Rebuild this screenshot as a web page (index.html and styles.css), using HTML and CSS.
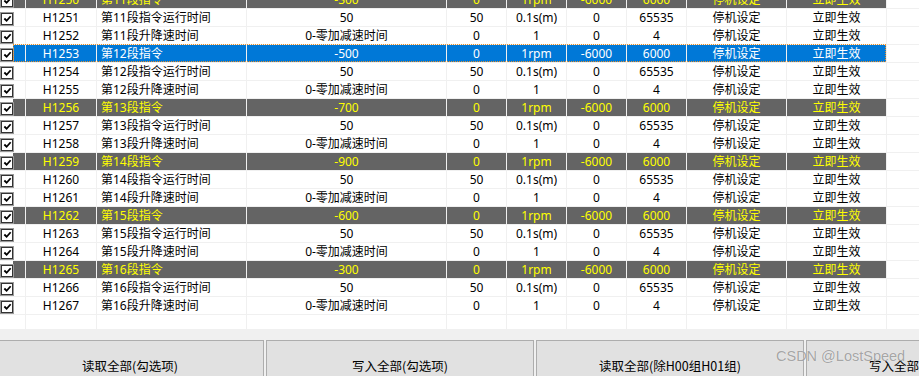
FILE: index.html
```html
<!DOCTYPE html>
<html lang="zh-CN">
<head>
    <meta charset="UTF-8">
    <title>多段位置参数</title>
    <link rel="stylesheet" href="styles.css">
</head>
<body>
    <div class="grid">
        <div class="rows">
            <div class="row seg">
                <div class="c chk"><span class="box"><svg viewBox="0 0 10 10"><path d="M1.5 5 L4 7.5 L8.5 2.5"/></svg></span></div>
                <div class="c">H1250</div><div class="c name">第11段指令</div><div class="c">-300</div><div class="c">0</div><div class="c">1rpm</div><div class="c">-6000</div><div class="c">6000</div><div class="c">停机设定</div><div class="c">立即生效</div><div class="c pad"></div>
            </div>
            <div class="row">
                <div class="c chk"><span class="box"><svg viewBox="0 0 10 10"><path d="M1.5 5 L4 7.5 L8.5 2.5"/></svg></span></div>
                <div class="c">H1251</div><div class="c name">第11段指令运行时间</div><div class="c">50</div><div class="c">50</div><div class="c">0.1s(m)</div><div class="c">0</div><div class="c">65535</div><div class="c">停机设定</div><div class="c">立即生效</div><div class="c pad"></div>
            </div>
            <div class="row">
                <div class="c chk"><span class="box"><svg viewBox="0 0 10 10"><path d="M1.5 5 L4 7.5 L8.5 2.5"/></svg></span></div>
                <div class="c">H1252</div><div class="c name">第11段升降速时间</div><div class="c">0-零加减速时间</div><div class="c">0</div><div class="c">1</div><div class="c">0</div><div class="c">4</div><div class="c">停机设定</div><div class="c">立即生效</div><div class="c pad"></div>
            </div>
            <div class="row selected">
                <div class="c chk"><span class="box"><svg viewBox="0 0 10 10"><path d="M1.5 5 L4 7.5 L8.5 2.5"/></svg></span></div>
                <div class="c">H1253</div><div class="c name">第12段指令</div><div class="c">-500</div><div class="c">0</div><div class="c">1rpm</div><div class="c">-6000</div><div class="c">6000</div><div class="c">停机设定</div><div class="c">立即生效</div><div class="c pad"></div>
            </div>
            <div class="row">
                <div class="c chk"><span class="box"><svg viewBox="0 0 10 10"><path d="M1.5 5 L4 7.5 L8.5 2.5"/></svg></span></div>
                <div class="c">H1254</div><div class="c name">第12段指令运行时间</div><div class="c">50</div><div class="c">50</div><div class="c">0.1s(m)</div><div class="c">0</div><div class="c">65535</div><div class="c">停机设定</div><div class="c">立即生效</div><div class="c pad"></div>
            </div>
            <div class="row">
                <div class="c chk"><span class="box"><svg viewBox="0 0 10 10"><path d="M1.5 5 L4 7.5 L8.5 2.5"/></svg></span></div>
                <div class="c">H1255</div><div class="c name">第12段升降速时间</div><div class="c">0-零加减速时间</div><div class="c">0</div><div class="c">1</div><div class="c">0</div><div class="c">4</div><div class="c">停机设定</div><div class="c">立即生效</div><div class="c pad"></div>
            </div>
            <div class="row seg">
                <div class="c chk"><span class="box"><svg viewBox="0 0 10 10"><path d="M1.5 5 L4 7.5 L8.5 2.5"/></svg></span></div>
                <div class="c">H1256</div><div class="c name">第13段指令</div><div class="c">-700</div><div class="c">0</div><div class="c">1rpm</div><div class="c">-6000</div><div class="c">6000</div><div class="c">停机设定</div><div class="c">立即生效</div><div class="c pad"></div>
            </div>
            <div class="row">
                <div class="c chk"><span class="box"><svg viewBox="0 0 10 10"><path d="M1.5 5 L4 7.5 L8.5 2.5"/></svg></span></div>
                <div class="c">H1257</div><div class="c name">第13段指令运行时间</div><div class="c">50</div><div class="c">50</div><div class="c">0.1s(m)</div><div class="c">0</div><div class="c">65535</div><div class="c">停机设定</div><div class="c">立即生效</div><div class="c pad"></div>
            </div>
            <div class="row">
                <div class="c chk"><span class="box"><svg viewBox="0 0 10 10"><path d="M1.5 5 L4 7.5 L8.5 2.5"/></svg></span></div>
                <div class="c">H1258</div><div class="c name">第13段升降速时间</div><div class="c">0-零加减速时间</div><div class="c">0</div><div class="c">1</div><div class="c">0</div><div class="c">4</div><div class="c">停机设定</div><div class="c">立即生效</div><div class="c pad"></div>
            </div>
            <div class="row seg">
                <div class="c chk"><span class="box"><svg viewBox="0 0 10 10"><path d="M1.5 5 L4 7.5 L8.5 2.5"/></svg></span></div>
                <div class="c">H1259</div><div class="c name">第14段指令</div><div class="c">-900</div><div class="c">0</div><div class="c">1rpm</div><div class="c">-6000</div><div class="c">6000</div><div class="c">停机设定</div><div class="c">立即生效</div><div class="c pad"></div>
            </div>
            <div class="row">
                <div class="c chk"><span class="box"><svg viewBox="0 0 10 10"><path d="M1.5 5 L4 7.5 L8.5 2.5"/></svg></span></div>
                <div class="c">H1260</div><div class="c name">第14段指令运行时间</div><div class="c">50</div><div class="c">50</div><div class="c">0.1s(m)</div><div class="c">0</div><div class="c">65535</div><div class="c">停机设定</div><div class="c">立即生效</div><div class="c pad"></div>
            </div>
            <div class="row">
                <div class="c chk"><span class="box"><svg viewBox="0 0 10 10"><path d="M1.5 5 L4 7.5 L8.5 2.5"/></svg></span></div>
                <div class="c">H1261</div><div class="c name">第14段升降速时间</div><div class="c">0-零加减速时间</div><div class="c">0</div><div class="c">1</div><div class="c">0</div><div class="c">4</div><div class="c">停机设定</div><div class="c">立即生效</div><div class="c pad"></div>
            </div>
            <div class="row seg">
                <div class="c chk"><span class="box"><svg viewBox="0 0 10 10"><path d="M1.5 5 L4 7.5 L8.5 2.5"/></svg></span></div>
                <div class="c">H1262</div><div class="c name">第15段指令</div><div class="c">-600</div><div class="c">0</div><div class="c">1rpm</div><div class="c">-6000</div><div class="c">6000</div><div class="c">停机设定</div><div class="c">立即生效</div><div class="c pad"></div>
            </div>
            <div class="row">
                <div class="c chk"><span class="box"><svg viewBox="0 0 10 10"><path d="M1.5 5 L4 7.5 L8.5 2.5"/></svg></span></div>
                <div class="c">H1263</div><div class="c name">第15段指令运行时间</div><div class="c">50</div><div class="c">50</div><div class="c">0.1s(m)</div><div class="c">0</div><div class="c">65535</div><div class="c">停机设定</div><div class="c">立即生效</div><div class="c pad"></div>
            </div>
            <div class="row">
                <div class="c chk"><span class="box"><svg viewBox="0 0 10 10"><path d="M1.5 5 L4 7.5 L8.5 2.5"/></svg></span></div>
                <div class="c">H1264</div><div class="c name">第15段升降速时间</div><div class="c">0-零加减速时间</div><div class="c">0</div><div class="c">1</div><div class="c">0</div><div class="c">4</div><div class="c">停机设定</div><div class="c">立即生效</div><div class="c pad"></div>
            </div>
            <div class="row seg">
                <div class="c chk"><span class="box"><svg viewBox="0 0 10 10"><path d="M1.5 5 L4 7.5 L8.5 2.5"/></svg></span></div>
                <div class="c">H1265</div><div class="c name">第16段指令</div><div class="c">-300</div><div class="c">0</div><div class="c">1rpm</div><div class="c">-6000</div><div class="c">6000</div><div class="c">停机设定</div><div class="c">立即生效</div><div class="c pad"></div>
            </div>
            <div class="row">
                <div class="c chk"><span class="box"><svg viewBox="0 0 10 10"><path d="M1.5 5 L4 7.5 L8.5 2.5"/></svg></span></div>
                <div class="c">H1266</div><div class="c name">第16段指令运行时间</div><div class="c">50</div><div class="c">50</div><div class="c">0.1s(m)</div><div class="c">0</div><div class="c">65535</div><div class="c">停机设定</div><div class="c">立即生效</div><div class="c pad"></div>
            </div>
            <div class="row">
                <div class="c chk"><span class="box"><svg viewBox="0 0 10 10"><path d="M1.5 5 L4 7.5 L8.5 2.5"/></svg></span></div>
                <div class="c">H1267</div><div class="c name">第16段升降速时间</div><div class="c">0-零加减速时间</div><div class="c">0</div><div class="c">1</div><div class="c">0</div><div class="c">4</div><div class="c">停机设定</div><div class="c">立即生效</div><div class="c pad"></div>
            </div>
            <div class="row">
                <div class="c chk"></div>
                <div class="c"></div><div class="c name"></div><div class="c"></div><div class="c"></div><div class="c"></div><div class="c"></div><div class="c"></div><div class="c"></div><div class="c"></div><div class="c pad"></div>
            </div>
        </div>
    </div>

    <div class="actions">
        <button>读取全部(勾选项)</button>
        <button>写入全部(勾选项)</button>
        <button>读取全部(除H00组H01组)</button>
        <button>写入全部(除H00组H01组)</button>
        <span class="watermark">CSDN @LostSpeed</span>
    </div>
</body>
</html>
```

FILE: styles.css
```css
body {
    margin: 0;
    background-color: #f0f0f0;
    font-family: "Noto Sans", "Noto Sans CJK SC", sans-serif;
    font-size: 12px;
    color: #000;
    overflow: hidden;
    height: 376px;
}
.grid {
    height: 329px;
    overflow: hidden;
    background-color: #fff;
}
.rows {
    margin-top: -9px;
}
.row {
    display: grid;
    grid-template-columns: 26px 71px 150px 200px 60px 60px 60px 60px 100px 100px 1fr;
    height: 18px;
    position: relative;
}
.c {
    box-sizing: border-box;
    height: 18px;
    border-right: 1px solid #f0f0f0;
    border-bottom: 1px solid #f0f0f0;
    display: flex;
    align-items: center;
    justify-content: center;
    white-space: nowrap;
    overflow: hidden;
    line-height: 17px;
}
.c.name {
    justify-content: flex-start;
    padding-left: 4px;
}
.c.chk {
    justify-content: flex-start;
    padding-left: 1px;
}
.box {
    box-sizing: border-box;
    width: 12px;
    height: 12px;
    margin-top: 2px;
    border: 1px solid #333;
    background-color: #fff;
    display: flex;
    align-items: center;
    justify-content: center;
    box-shadow: 0 0 0 1px #9a9a9a;
}
.box svg {
    width: 9px;
    height: 9px;
}
.box path {
    fill: none;
    stroke: #000;
    stroke-width: 2;
}
.row.seg .c {
    background-color: #646464;
    color: #ffff00;
}
.row.selected .c {
    background-color: #0078d7;
    color: #fff;
}
.row.seg .c.chk,
.row.selected .c.chk {
    background: linear-gradient(to right, #fff 13px, transparent 13px);
}
.row.seg .c.chk {
    background-color: #646464;
}
.row.selected .c.chk {
    background-color: #0078d7;
}
.row .c.pad,
.row.seg .c.pad,
.row.selected .c.pad {
    background: #fff;
    border-right: none;
}
.row.selected::after {
    content: "";
    position: absolute;
    left: 13px;
    top: -1px;
    width: 873px;
    height: 18px;
    box-sizing: border-box;
    border: 1px dotted #e8902a;
    pointer-events: none;
}
.actions {
    position: relative;
    display: flex;
    gap: 2px;
    margin-left: -4px;
    padding-top: 11px;
}
.actions button {
    flex: 0 0 268px;
    height: 50px;
    background-color: #e1e1e1;
    border: 1px solid #adadad;
    font-family: "Noto Sans CJK SC", sans-serif;
    font-size: 12.5px;
    color: #000;
    padding: 0;
    white-space: nowrap;
}
.watermark {
    position: absolute;
    left: 780px;
    top: 19px;
    font-family: "Liberation Sans", Arial, sans-serif;
    font-size: 14.5px;
    color: rgba(120, 120, 120, 0.65);
    text-shadow: 0 0 1px rgba(255, 255, 255, 0.8);
    white-space: nowrap;
}
```
